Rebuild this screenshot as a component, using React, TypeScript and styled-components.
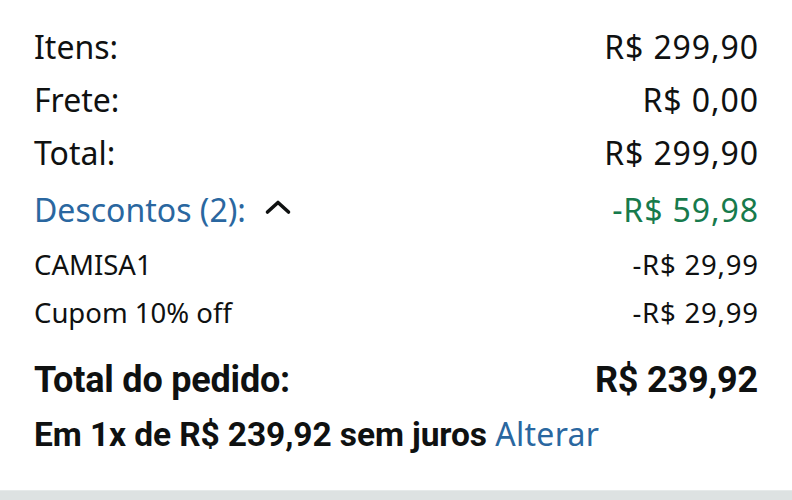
import styled, { createGlobalStyle } from "styled-components";

const GlobalStyle = createGlobalStyle`
  body {
    margin: 0;
    background: #ffffff;
    font-family: "Noto Sans", "Open Sans", sans-serif;
    color: #0f1111;
  }
`;

const Page = styled.div`
  width: 792px;
  height: 500px;
  overflow: hidden;
  display: flex;
  flex-direction: column;
`;

const Summary = styled.div`
  display: flex;
  flex-direction: column;
  padding: 20px 34px 0 34px;
`;

const Row = styled.div<{ $small?: boolean; $gap?: number }>`
  display: flex;
  justify-content: space-between;
  align-items: center;
  font-size: ${(p) => (p.$small ? "27.5px" : "32px")};
  line-height: ${(p) => (p.$small ? "48px" : "53px")};
  margin-top: ${(p) => p.$gap || 0}px;
`;

const Label = styled.span<{ $link?: boolean }>`
  display: flex;
  align-items: center;
  color: ${(p) => (p.$link ? "#2a67a0" : "#0f1111")};
`;

const Value = styled.span<{ $green?: boolean; $small?: boolean }>`
  color: ${(p) => (p.$green ? "#177a4c" : "#0f1111")};
  letter-spacing: ${(p) => (p.$small ? "0.8px" : "0.9px")};
  margin-right: ${(p) => (p.$small ? "-0.8px" : "-0.9px")};
`;

const Chevron = styled.svg`
  margin-left: 18px;
  margin-top: -6px;
`;

const TotalRow = styled.div`
  display: flex;
  justify-content: space-between;
  align-items: center;
  margin-top: 17px;
  font-family: Roboto, "Noto Sans", sans-serif;
  font-weight: 700;
  font-size: 36px;
  line-height: 52px;
  letter-spacing: -0.2px;
`;

const Installments = styled.div`
  margin-top: 2px;
  font-family: Roboto, "Noto Sans", sans-serif;
  font-weight: 700;
  font-size: 33.5px;
  line-height: 52px;
  letter-spacing: -0.1px;
`;

const ChangeLink = styled.span`
  font-family: "Noto Sans", "Open Sans", sans-serif;
  font-weight: 400;
  font-size: 32px;
  letter-spacing: 0.3px;
  color: #2a67a0;
`;

const Divider = styled.div`
  margin-top: auto;
  height: 9px;
  background: #dde2e2;
  border-top: 1px solid #e6eaea;
`;

const lines = [
  { label: "Itens:", value: "R$ 299,90" },
  { label: "Frete:", value: "R$ 0,00" },
  { label: "Total:", value: "R$ 299,90" },
];

const discounts = [
  { label: "CAMISA1", value: "-R$ 29,99" },
  { label: "Cupom 10% off", value: "-R$ 29,99" },
];

export default function App() {
  return (
    <Page>
      <GlobalStyle />
      <Summary>
        {lines.map((l) => (
          <Row key={l.label}>
            <Label>{l.label}</Label>
            <Value>{l.value}</Value>
          </Row>
        ))}
        <Row $gap={4}>
          <Label $link>
            Descontos (2):
            <Chevron width="28" height="16" viewBox="0 0 28 16">
              <path d="M3.5 13 L14 3.5 L24.5 13" fill="none" stroke="#0f1111" strokeWidth="3.6" strokeLinecap="round" strokeLinejoin="round" />
            </Chevron>
          </Label>
          <Value $green>-R$ 59,98</Value>
        </Row>
        {discounts.map((d, i) => (
          <Row key={d.label} $small $gap={i === 0 ? 5 : 0}>
            <Label>{d.label}</Label>
            <Value $small>{d.value}</Value>
          </Row>
        ))}
        <TotalRow>
          <span>Total do pedido:</span>
          <span>R$ 239,92</span>
        </TotalRow>
        <Installments>
          Em 1x de R$ 239,92 sem juros <ChangeLink>Alterar</ChangeLink>
        </Installments>
      </Summary>
      <Divider />
    </Page>
  );
}
